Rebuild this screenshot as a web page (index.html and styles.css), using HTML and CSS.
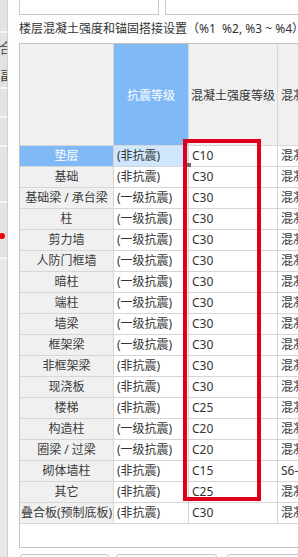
FILE: index.html
```html
<!DOCTYPE html>
<html lang="zh">
<head>
  <meta charset="UTF-8">
  <title>楼层混凝土强度和锚固搭接设置</title>
  <link rel="stylesheet" href="styles.css">
</head>
<body>
  <div class="app">
    <div class="sidebar">
      <div class="side-item h33"></div>
      <div class="side-item h55 tool">
        <span class="side-glyph icon">合</span>
        <span class="side-glyph">畐</span>
      </div>
      <div class="side-item h28"></div>
      <div class="side-item h28"></div>
      <div class="side-item h55"></div>
      <div class="side-item h60 dot-row"><span class="dot"></span></div>
      <div class="side-item rest"></div>
    </div>
    <div class="panel">
      <div class="inputs">
        <div class="input first"></div>
        <div class="input second"></div>
      </div>
      <div class="caption">楼层混凝土强度和锚固搭接设置（%1&nbsp;&nbsp;%2, %3 ~ %4）</div>
      <div class="sheet">
        <div class="grid">
          <div class="hd"></div>
          <div class="hd active">抗震等级</div>
          <div class="hd">混凝土强度等级</div>
          <div class="hd left">混凝土</div>

          <div class="rh active">垫层</div><div class="c sel">(非抗震)</div><div class="c">C10</div><div class="c">混凝土</div>
          <div class="rh">基础</div><div class="c">(非抗震)</div><div class="c">C30</div><div class="c">混凝土</div>
          <div class="rh">基础梁 / 承台梁</div><div class="c">(一级抗震)</div><div class="c">C30</div><div class="c">混凝土</div>
          <div class="rh">柱</div><div class="c">(一级抗震)</div><div class="c">C30</div><div class="c">混凝土</div>
          <div class="rh">剪力墙</div><div class="c">(一级抗震)</div><div class="c">C30</div><div class="c">混凝土</div>
          <div class="rh">人防门框墙</div><div class="c">(一级抗震)</div><div class="c">C30</div><div class="c">混凝土</div>
          <div class="rh">暗柱</div><div class="c">(一级抗震)</div><div class="c">C30</div><div class="c">混凝土</div>
          <div class="rh">端柱</div><div class="c">(一级抗震)</div><div class="c">C30</div><div class="c">混凝土</div>
          <div class="rh">墙梁</div><div class="c">(一级抗震)</div><div class="c">C30</div><div class="c">混凝土</div>
          <div class="rh">框架梁</div><div class="c">(一级抗震)</div><div class="c">C30</div><div class="c">混凝土</div>
          <div class="rh">非框架梁</div><div class="c">(非抗震)</div><div class="c">C30</div><div class="c">混凝土</div>
          <div class="rh">现浇板</div><div class="c">(非抗震)</div><div class="c">C30</div><div class="c">混凝土</div>
          <div class="rh">楼梯</div><div class="c">(非抗震)</div><div class="c">C25</div><div class="c">混凝土</div>
          <div class="rh">构造柱</div><div class="c">(一级抗震)</div><div class="c">C20</div><div class="c">混凝土</div>
          <div class="rh">圈梁 / 过梁</div><div class="c">(一级抗震)</div><div class="c">C20</div><div class="c">混凝土</div>
          <div class="rh">砌体墙柱</div><div class="c">(非抗震)</div><div class="c">C15</div><div class="c">S6-M5</div>
          <div class="rh">其它</div><div class="c">(非抗震)</div><div class="c">C25</div><div class="c">混凝土</div>
          <div class="rh">叠合板(预制底板)</div><div class="c">(非抗震)</div><div class="c">C30</div><div class="c">混凝土</div>
        </div>
        <div class="sheet-empty"></div>
        <div class="fill-handle"></div>
        <div class="mark"></div>
      </div>
      <div class="buttons">
        <div class="btn b1"></div>
        <div class="btn b2"></div>
        <div class="btn b3"></div>
      </div>
    </div>
  </div>
</body>
</html>
```

FILE: styles.css
```css
html, body {
  margin: 0;
  padding: 0;
  height: 100%;
  overflow: hidden;
  background-color: #fdfdfd;
  font-family: "Noto Sans", "Noto Sans CJK SC", sans-serif;
  font-size: 12px;
  color: #333;
}
.app {
  display: flex;
  height: 557px;
}
.sidebar {
  width: 7px;
  flex: none;
  display: flex;
  flex-direction: column;
  gap: 2px;
  background-color: #f6f6f6;
  border-right: 1px solid #cfcfcf;
  overflow: hidden;
}
.side-item {
  background-color: #e2e2e2;
  display: flex;
  justify-content: flex-end;
  align-items: center;
  overflow: hidden;
}
.side-item.tool {
  flex-direction: column;
  align-items: flex-end;
  justify-content: flex-start;
  padding-top: 8px;
  gap: 13px;
  box-sizing: border-box;
}
.side-item.h33 { height: 31px; }
.side-item.h55 { height: 54px; }
.side-item.h28 { height: 27px; }
.side-item.h60 { height: 54px; }
.side-item.rest { flex: 1; background-color: #e9e9e9; }
.side-glyph {
  font-size: 13px;
  line-height: 14px;
  white-space: nowrap;
  color: #3a3a3a;
  margin-right: -6px;
}
.side-glyph.icon {
  font-size: 14px;
  color: #555;
}
.dot-row {
  justify-content: flex-start;
}
.dot {
  width: 6px;
  height: 6px;
  margin-left: -1px;
  margin-top: 12px;
  border-radius: 50%;
  background-color: #f00000;
}
.panel {
  flex: 1;
  padding-left: 11px;
  overflow: hidden;
  background-color: #fdfdfd;
}
.inputs {
  display: flex;
  gap: 6px;
  height: 15px;
}
.input {
  height: 14px;
  background-color: #fff;
  border: 1px solid #c9c9c9;
  border-top: none;
  flex: none;
}
.input.first { width: 138px; }
.input.second { width: 200px; }
.caption {
  height: 28px;
  line-height: 28px;
  white-space: nowrap;
  color: #333;
}
.sheet {
  position: relative;
  width: 320px;
  border: 1px solid #c4c4c4;
  background-color: #fff;
}
.grid {
  display: grid;
  grid-template-columns: 93px 74px 88px 60px;
  grid-template-rows: 101px repeat(18, 20px);
  gap: 1px;
  background-color: #d6d6d6;
  border-bottom: 1px solid #d6d6d6;
}
.grid > div {
  white-space: nowrap;
  overflow: hidden;
}
.hd {
  background-color: #f0f0f0;
  display: flex;
  align-items: center;
  justify-content: center;
  color: #333;
}
.hd.left {
  justify-content: flex-start;
  padding-left: 3px;
}
.hd.active {
  background-color: #7fb9f6;
  color: #fff;
}
.rh {
  background-color: #f0f0f0;
  line-height: 20px;
  text-align: center;
  color: #3a3a3a;
}
.rh.active {
  background-color: #7fb9f6;
  color: #fff;
}
.c {
  background-color: #fff;
  line-height: 20px;
  padding-left: 3px;
  color: #333;
}
.c.sel {
  background-color: #cfe6fc;
}
.sheet-empty {
  height: 23px;
}
.fill-handle {
  position: absolute;
  left: 167px;
  top: 119px;
  width: 4px;
  height: 4px;
  background-color: #6a6a6a;
}
.mark {
  position: absolute;
  left: 163px;
  top: 95px;
  width: 78px;
  height: 362px;
  box-sizing: border-box;
  border: 4px solid #e0001a;
}
.buttons {
  display: flex;
  margin-top: 6px;
  margin-left: 1px;
}
.btn {
  height: 20px;
  border: 1px solid #c6c6c6;
  border-radius: 3px;
  background-color: #fdfdfd;
  flex: none;
}
.btn.b1 { width: 87px; margin-right: 7px; }
.btn.b2 { width: 99px; margin-right: 10px; }
.btn.b3 { width: 80px; }
```
